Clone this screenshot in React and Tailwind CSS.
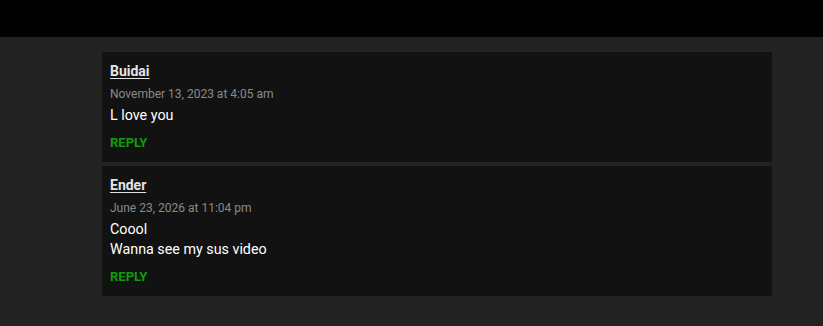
import React from 'react';

const comments = [
  { id: 1, author: 'Buidai', date: 'November 13, 2023 at 4:05 am', lines: ['L love you'] },
  { id: 2, author: 'Ender', date: 'June 23, 2026 at 11:04 pm', lines: ['Coool', 'Wanna see my sus video'] },
];

const Comment = ({ author, date, lines }) => (
  <div className="bg-[#121212] px-2 pt-2 pb-[9px]">
    <a href="#" className="block text-[14px] leading-[22px] font-bold text-[#e4e4e4] underline underline-offset-2">
      {author}
    </a>
    <div className="mt-[2px] text-[12px] leading-[20px] text-[#8a8a8a]">{date}</div>
    <div className="mt-px text-[14.3px] leading-[20px] text-white">
      {lines.map((l, i) => (
        <p key={i}>{l}</p>
      ))}
    </div>
    <div className="mt-2 text-[13px] leading-[20px] font-bold text-[#139a0c]">REPLY</div>
  </div>
);

export default function App() {
  return (
    <div className="w-[823px] h-[326px] overflow-hidden bg-[#222222] font-['Roboto',sans-serif]">
      <div className="h-[37px] bg-black" />
      <div className="pt-[15px] pl-[102px]">
        <div className="w-[670px] flex flex-col gap-1">
          {comments.map((c) => (
            <Comment key={c.id} {...c} />
          ))}
        </div>
      </div>
    </div>
  );
}
